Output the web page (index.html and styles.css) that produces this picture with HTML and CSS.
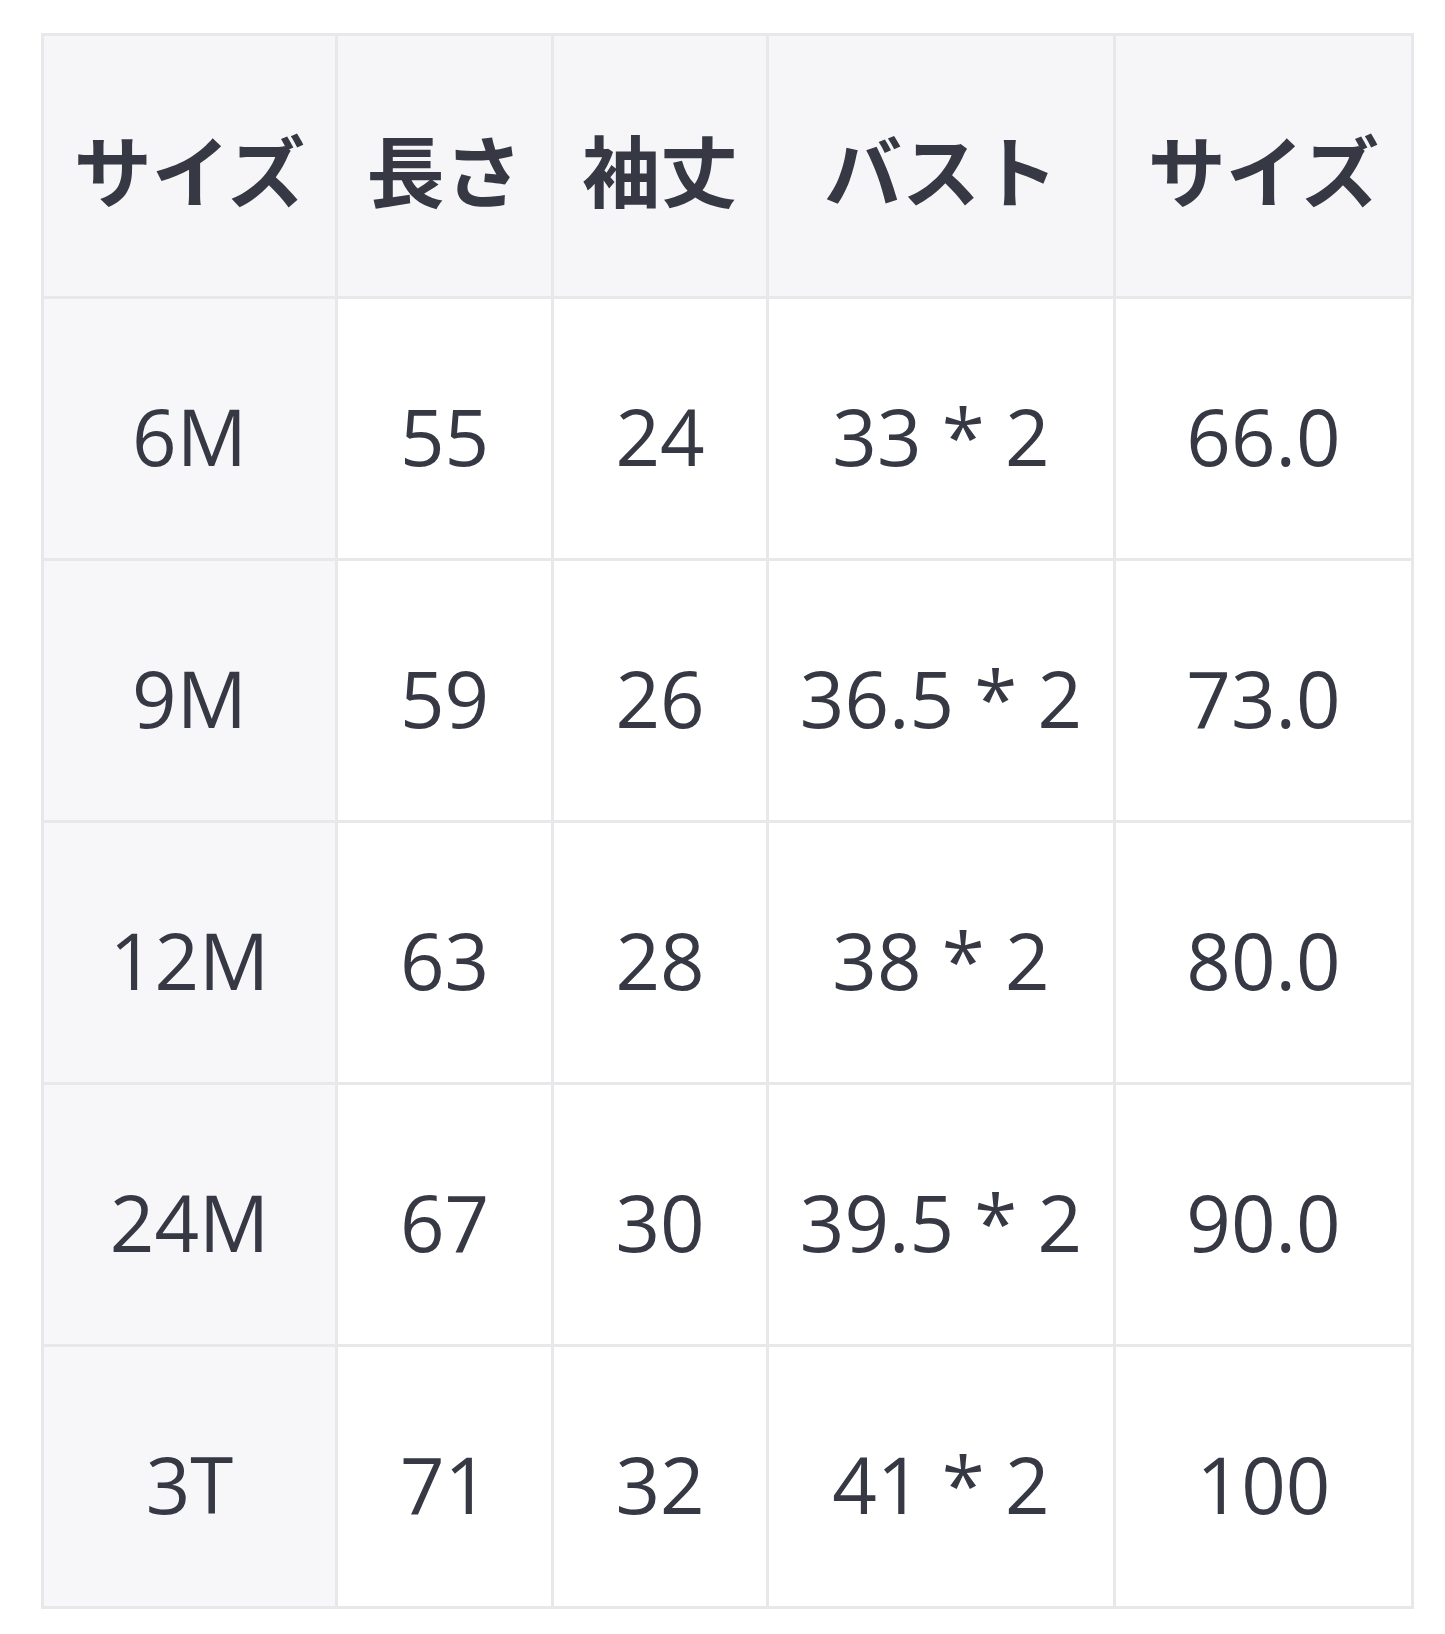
FILE: index.html
```html
<!DOCTYPE html>
<html lang="ja">
<head>
<meta charset="utf-8">
<link rel="stylesheet" href="styles.css">
</head>
<body>
<table class="size-table">
  <colgroup>
    <col class="c1"><col class="c2"><col class="c3"><col class="c4"><col class="c5">
  </colgroup>
  <thead>
    <tr><th>サイズ</th><th>長さ</th><th>袖丈</th><th>バスト</th><th>サイズ</th></tr>
  </thead>
  <tbody>
    <tr><td class="first">6M</td><td>55</td><td>24</td><td>33 * 2</td><td>66.0</td></tr>
    <tr><td class="first">9M</td><td>59</td><td>26</td><td>36.5 * 2</td><td>73.0</td></tr>
    <tr><td class="first">12M</td><td>63</td><td>28</td><td>38 * 2</td><td>80.0</td></tr>
    <tr><td class="first">24M</td><td>67</td><td>30</td><td>39.5 * 2</td><td>90.0</td></tr>
    <tr><td class="first">3T</td><td>71</td><td>32</td><td>41 * 2</td><td>100</td></tr>
  </tbody>
</table>
</body>
</html>
```

FILE: styles.css
```css
html, body {
  margin: 0;
  padding: 0;
  background: #ffffff;
}

body {
  padding: 33px 0 0 41px;
  font-family: "Open Sans", "Noto Sans CJK JP", sans-serif;
  color: #363943;
}

.size-table {
  border-collapse: collapse;
  table-layout: fixed;
  width: 1370px;
  border: 3px solid #e8e8eb;
}

.c1 { width: 294px; }
.c2 { width: 216px; }
.c3 { width: 215px; }
.c4 { width: 347px; }
.c5 { width: 298px; }

.size-table th,
.size-table td {
  border: 3px solid #e8e8eb;
  text-align: center;
  vertical-align: middle;
  padding: 0;
  font-size: 78px;
  line-height: 1;
  white-space: nowrap;
}

.size-table th {
  background: #f6f6f8;
  font-weight: 700;
  color: #363943;
  font-family: "Noto Sans CJK JP", "Open Sans", sans-serif;
  padding-top: 4px;
  height: 256px;
}

.size-table td {
  font-weight: 400;
  padding-top: 14px;
  height: 245px;
}

.size-table td.first {
  background: #f7f7f9;
}
```
